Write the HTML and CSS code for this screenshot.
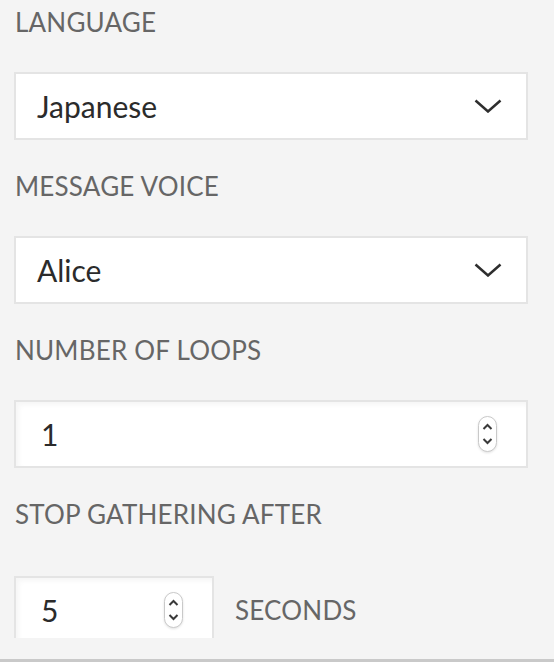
FILE: index.html
```html
<!DOCTYPE html>
<html lang="en">
<head>
    <meta charset="UTF-8">
    <title>Say / Play settings</title>
    <link rel="stylesheet" href="styles.css">
</head>
<body>
    <div id="panel">
        <div class="group">
            <div class="label">LANGUAGE</div>
            <div class="field">
                <span class="value">Japanese</span>
                <svg class="arrow" width="28" height="14" viewBox="0 0 28 14">
                    <path d="M1.5 1.5 L14 12.5 L26.5 1.5" fill="none" stroke="#2e2e2e" stroke-width="2.5"/>
                </svg>
            </div>
        </div>
        <div class="group">
            <div class="label">MESSAGE VOICE</div>
            <div class="field">
                <span class="value">Alice</span>
                <svg class="arrow" width="28" height="14" viewBox="0 0 28 14">
                    <path d="M1.5 1.5 L14 12.5 L26.5 1.5" fill="none" stroke="#2e2e2e" stroke-width="2.5"/>
                </svg>
            </div>
        </div>
        <div class="group">
            <div class="label">NUMBER OF LOOPS</div>
            <div class="field number">
                <span class="value">1</span>
                <svg class="spin" width="19" height="36" viewBox="0 0 19 36">
                    <rect x="0.5" y="0.5" width="18" height="35" rx="9" fill="#fff" stroke="#c9c9c9"/>
                    <path d="M5.5 13 L9.5 9 L13.5 13" fill="none" stroke="#3a3a3a" stroke-width="2"/>
                    <path d="M5.5 23 L9.5 27 L13.5 23" fill="none" stroke="#3a3a3a" stroke-width="2"/>
                </svg>
            </div>
        </div>
        <div class="group">
            <div class="label wide">STOP GATHERING AFTER</div>
            <div class="row">
                <div class="field number small">
                    <span class="value">5</span>
                    <svg class="spin" width="19" height="36" viewBox="0 0 19 36">
                        <rect x="0.5" y="0.5" width="18" height="35" rx="9" fill="#fff" stroke="#c9c9c9"/>
                        <path d="M5.5 13 L9.5 9 L13.5 13" fill="none" stroke="#3a3a3a" stroke-width="2"/>
                        <path d="M5.5 23 L9.5 27 L13.5 23" fill="none" stroke="#3a3a3a" stroke-width="2"/>
                    </svg>
                </div>
                <span class="unit">SECONDS</span>
            </div>
        </div>
    </div>
    <div id="footer"></div>
</body>
</html>
```

FILE: styles.css
```css
body{
    margin: 0;
    background: #f4f4f4;
    font-family: Lato, "Open Sans", sans-serif;
}

#panel{
    height: 638px;
    overflow: hidden;
    padding: 9px 26px 0 14px;
    box-sizing: border-box;
}
#footer{
    height: 21px;
    border-bottom: 3px solid #c9c9c9;
}

.group{
    margin-bottom: 33px;
}
.label{
    font-size: 26px;
    line-height: 26px;
    letter-spacing: 0.2px;
    color: #666;
    margin: 0 0 37px 1px;
}
.label.wide{
    margin-bottom: 49px;
}

.field{
    height: 68px;
    box-sizing: border-box;
    border: 2px solid #e4e4e4;
    background: #fff;
    display: flex;
    align-items: center;
    justify-content: space-between;
    padding: 0 24px 0 21px;
}
.value{
    font-size: 30px;
    line-height: 30px;
    color: #2b2b2b;
}
.arrow{
    display: block;
}

.number{
    padding: 0 29px 0 25px;
    box-shadow: inset 3px 3px 5px rgba(0,0,0,0.04);
}
.spin{
    display: block;
    filter: drop-shadow(0 1px 1px rgba(0,0,0,0.12));
}

.row{
    display: flex;
    align-items: center;
}
.small{
    width: 200px;
}
.unit{
    margin-left: 21px;
    font-size: 26px;
    letter-spacing: 0.2px;
    color: #666;
}
```
